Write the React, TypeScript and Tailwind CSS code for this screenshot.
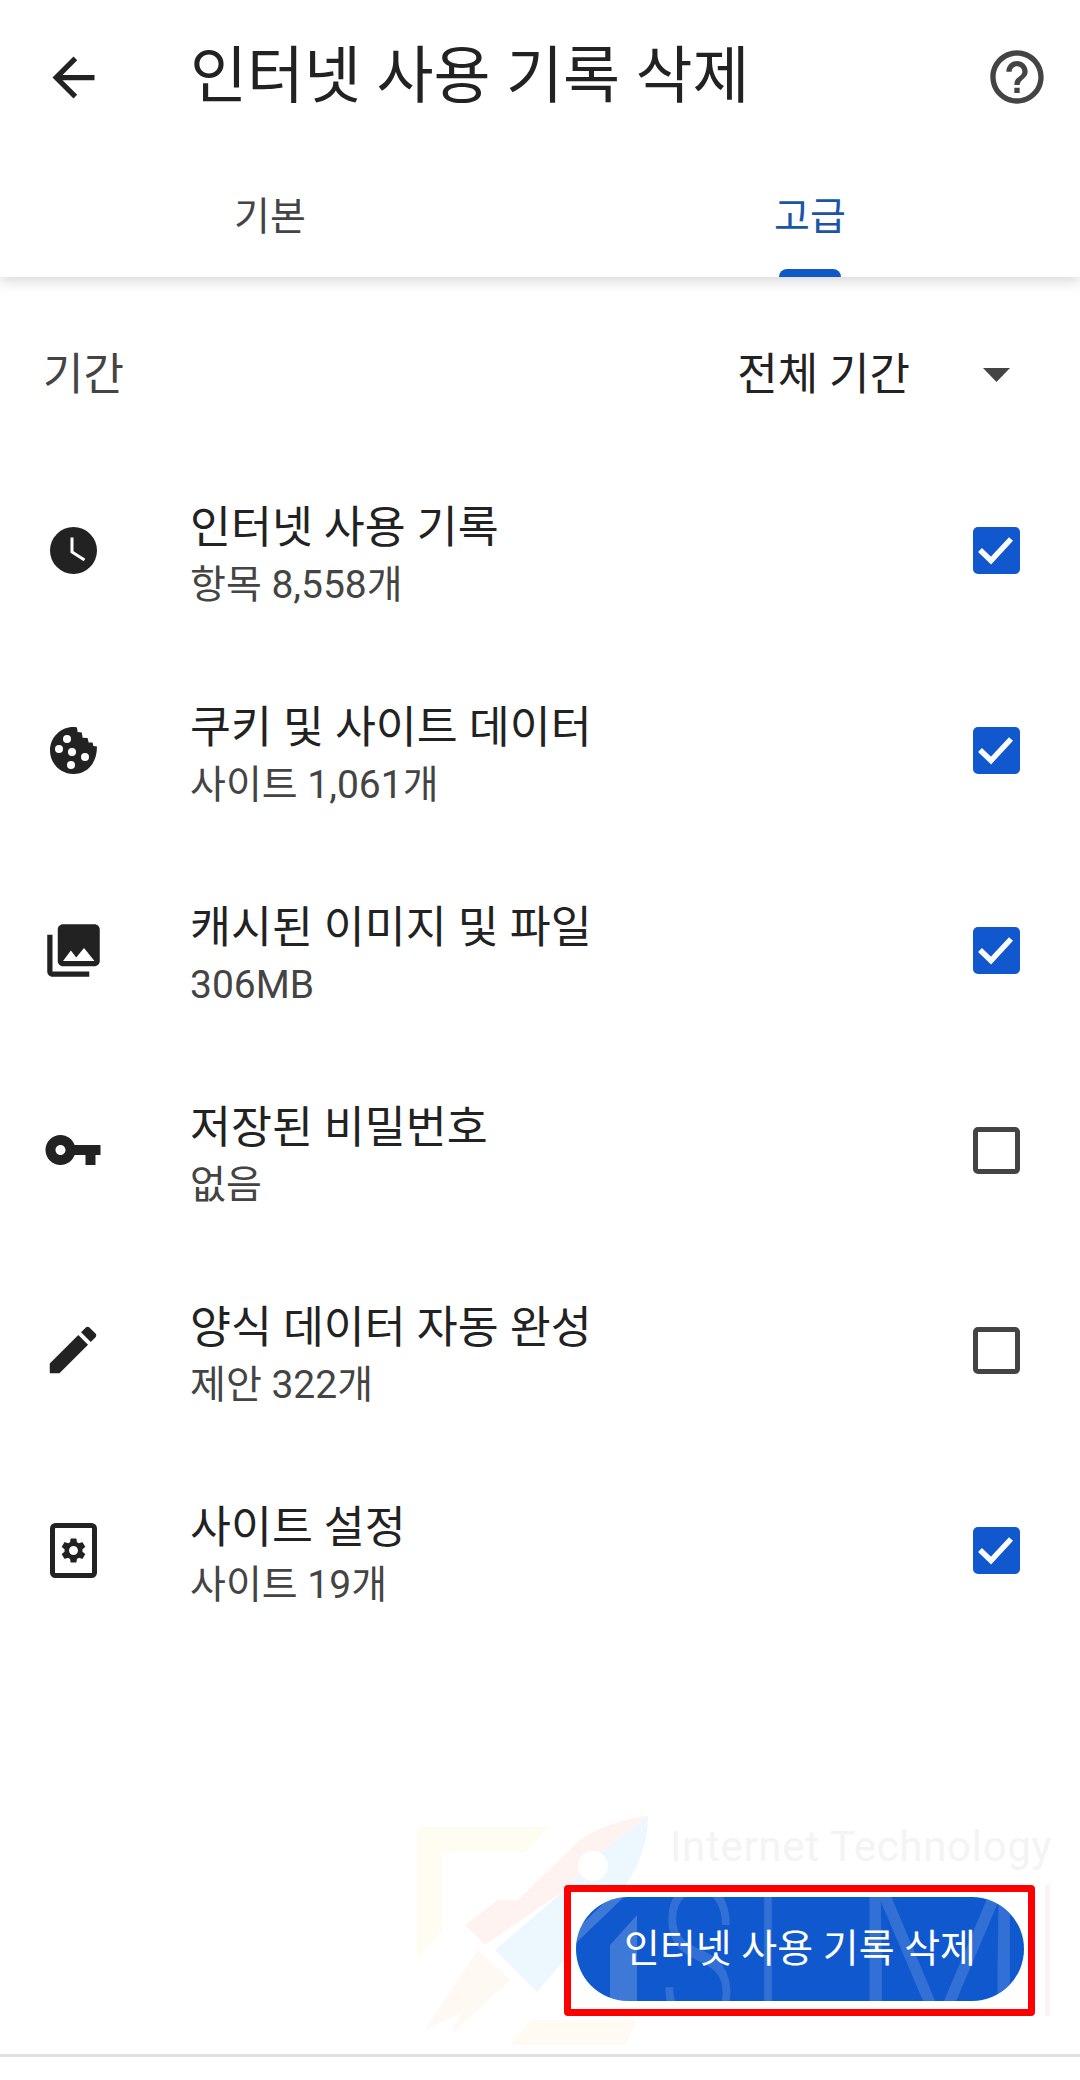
const FONT = 'font-["Roboto","Noto_Sans_CJK_KR",sans-serif]';

function Glyph({ d, size, className = "text-[#222222]" }: { d: string; size: number; className?: string }) {
  return (
    <svg viewBox="0 0 24 24" width={size} height={size} className={className} fill="currentColor">
      <path d={d} fillRule="evenodd" />
    </svg>
  );
}

const PHOTOS =
  "M22 16V4c0-1.1-.9-2-2-2H8c-1.1 0-2 .9-2 2v12c0 1.1.9 2 2 2h12c1.1 0 2-.9 2-2zm-11-4l2.03 2.71L16 11l4 5H8l3-4zM2 6v14c0 1.1.9 2 2 2h14v-2H4V6H2z";
const KEY =
  "M12.65 10C11.83 7.67 9.61 6 7 6c-3.31 0-6 2.69-6 6s2.69 6 6 6c2.61 0 4.83-1.67 5.65-4H17v4h4v-4h2v-4H12.65zM7 14c-1.1 0-2-.9-2-2s.9-2 2-2 2 .9 2 2-.9 2-2 2z";
const EDIT =
  "M3 17.25V21h3.75L17.81 9.94l-3.75-3.75L3 17.25zM20.71 7.04c.39-.39.39-1.02 0-1.41l-2.34-2.34c-.39-.39-1.02-.39-1.41 0l-1.83 1.83 3.75 3.75 1.83-1.83z";
const GEAR =
  "M19.14 12.94c.04-.3.06-.61.06-.94 0-.32-.02-.64-.07-.94l2.03-1.58c.18-.14.23-.41.12-.61l-1.92-3.32c-.12-.22-.37-.29-.59-.22l-2.39.96c-.5-.38-1.03-.7-1.62-.94l-.36-2.54c-.04-.24-.24-.41-.48-.41h-3.84c-.24 0-.43.17-.47.41l-.36 2.54c-.59.24-1.13.57-1.62.94l-2.39-.96c-.22-.08-.47 0-.59.22L2.74 8.87c-.12.21-.08.47.12.61l2.03 1.58c-.05.3-.09.63-.09.94s.02.64.07.94l-2.03 1.58c-.18.14-.23.41-.12.61l1.92 3.32c.12.22.37.29.59.22l2.39-.96c.5.38 1.03.7 1.62.94l.36 2.54c.05.24.24.41.48.41h3.84c.24 0 .44-.17.47-.41l.36-2.54c.59-.24 1.13-.56 1.62-.94l2.39.96c.22.08.47 0 .59-.22l1.92-3.32c.12-.22.07-.47-.12-.61l-2.01-1.58zM12 15.6c-1.98 0-3.6-1.62-3.6-3.6s1.62-3.6 3.6-3.6 3.6 1.62 3.6 3.6-1.62 3.6-3.6 3.6z";

function ClockIcon() {
  return (
    <svg viewBox="0 0 47 47" width={47} height={47}>
      <circle cx="23.5" cy="23.5" r="23.5" fill="#222222" />
      <path d="M22 10.5V25L34.5 33" fill="none" stroke="#ffffff" strokeWidth="3" />
    </svg>
  );
}

function CookieIcon() {
  return (
    <svg viewBox="0 0 47 47" width={47} height={47}>
      <path
        d="M23.5 0C24.8 0 26 .1 27 .4L27.6 5 31.8 5.6 32.6 10.8 37.6 11 38.6 15.4 42.6 15.4 43.4 19 47 19.6C47 36.5 37 47 23.5 47 10.5 47 0 36.5 0 23.5S10.5 0 23.5 0z"
        fill="#222222"
      />
      <circle cx="17" cy="12" r="4" fill="#fff" />
      <circle cx="9" cy="22" r="4" fill="#fff" />
      <circle cx="22" cy="25" r="4" fill="#fff" />
      <circle cx="35" cy="30" r="4" fill="#fff" />
      <circle cx="21" cy="38" r="4" fill="#fff" />
    </svg>
  );
}

function SiteIcon() {
  return (
    <svg viewBox="0 0 47 55" width={47} height={55}>
      <rect x="2.5" y="2.5" width="42" height="50" rx="3" fill="none" stroke="#222222" strokeWidth="5" />
      <g transform="translate(8.5 12.5) scale(1.25)">
        <path d={GEAR} fill="#222222" fillRule="evenodd" />
      </g>
    </svg>
  );
}

function Check({ on }: { on: boolean }) {
  if (!on) return <div className="h-[47px] w-[47px] rounded-[5px] border-[5px] border-[#444444] bg-white" />;
  return (
    <div className="flex h-[47px] w-[47px] items-center justify-center rounded-[5px] bg-[#1158ce]">
      <svg viewBox="0 0 47 47" width={47} height={47}>
        <path d="M7 23l11 10.5L38 12" fill="none" stroke="#ffffff" strokeWidth="5.5" />
      </svg>
    </div>
  );
}

const rows = [
  { icon: <ClockIcon />, title: "인터넷 사용 기록", sub: "항목 8,558개", on: true },
  { icon: <CookieIcon />, title: "쿠키 및 사이트 데이터", sub: "사이트 1,061개", on: true },
  { icon: <Glyph d={PHOTOS} size={63} />, title: "캐시된 이미지 및 파일", sub: "306MB", on: true },
  { icon: <Glyph d={KEY} size={60} />, title: "저장된 비밀번호", sub: "없음", on: false },
  { icon: <Glyph d={EDIT} size={62} />, title: "양식 데이터 자동 완성", sub: "제안 322개", on: false },
  { icon: <SiteIcon />, title: "사이트 설정", sub: "사이트 19개", on: true },
];

function Watermark() {
  return (
    <div className="pointer-events-none absolute left-[400px] top-[1790px] h-[270px] w-[680px]">
      <svg viewBox="0 0 300 270" width={300} height={270}>
        <path d="M17 37H150L125 62H42V140L17 170z" fill="#fffcf2" />
        <path d="M130 230H236L226 255H110z" fill="#fffbf3" />
        <path d="M65 135L98 110H118L180 50Q210 30 248 26Q200 60 165 100L85 155z" fill="#fff3f1" />
        <path d="M78 160L110 190L50 245L62 222L25 240L42 215z" fill="#fff8f3" />
        <path d="M248 26Q248 70 215 110L137 202L95 160L165 100Q200 60 248 26z" fill="#ecf8fe" />
        <circle cx="193" cy="76" r="15" fill="#ffffff" />
      </svg>
      <span className="absolute left-[270px] top-[32px] text-[42px] leading-[50px] tracking-[0.7px] text-[#f4f4f4]">
        Internet Technology
      </span>
      <div className="absolute left-[645px] top-[95px] h-[131px] w-[5px] bg-[#fff2f2]" />
    </div>
  );
}

export default function App() {
  return (
    <div className={`relative flex h-[2080px] w-[1080px] flex-col overflow-hidden bg-white ${FONT}`}>
      <Watermark />
      <div className="relative z-10 bg-white shadow-[0_3px_14px_rgba(0,0,0,0.18)]">
        <header className="flex h-[154px] items-center justify-between pl-[42px] pr-[31px]">
          <div className="flex items-center">
            <Glyph d="M20 11H7.83l5.59-5.59L12 4l-8 8 8 8 1.41-1.41L7.83 13H20v-2z" size={63} className="text-[#222222]" />
            <h1 className="ml-[85px] text-[62px] font-normal leading-none text-[#222222]">인터넷 사용 기록 삭제</h1>
          </div>
          <svg viewBox="0 0 24 24" width={64} height={64} className="text-[#444444]" fill="currentColor">
            <path d="M11 18h2v-2h-2v2zm1-16C6.48 2 2 6.48 2 12s4.48 10 10 10 10-4.48 10-10S17.52 2 12 2zm0 18c-4.41 0-8-3.59-8-8s3.59-8 8-8 8 3.59 8 8-3.59 8-8 8zm0-14c-2.21 0-4 1.79-4 4h2c0-1.1.9-2 2-2s2 .9 2 2c0 2-3 1.75-3 5h2c0-2.25 3-2.5 3-5 0-2.21-1.79-4-4-4z" />
          </svg>
        </header>
        <nav className="flex h-[123px]">
          <div className="flex flex-1 items-start justify-center pt-[34px]">
            <span className="text-[39px] leading-[58px] text-[#444444]">기본</span>
          </div>
          <div className="relative flex flex-1 items-start justify-center pt-[34px]">
            <span className="text-[39px] leading-[58px] text-[#1a56a8]">고급</span>
            <div className="absolute bottom-0 left-1/2 h-[8px] w-[62px] -translate-x-1/2 rounded-t-[8px] bg-[#0f58c8]" />
          </div>
        </nav>
      </div>

      <div className="relative mt-[19px] flex h-[154px] items-center justify-between pl-[43px] pr-[70px] pt-[3px]">
        <span className="text-[44px] text-[#444444]">기간</span>
        <div className="flex items-center">
          <span className="text-[44px] text-[#222222]">전체 기간</span>
          <svg viewBox="0 0 27 14" width={27} height={14} className="ml-[73px] text-[#444444]" fill="currentColor">
            <path d="M0 0h27L13.5 14z" />
          </svg>
        </div>
      </div>

      <div className="relative flex flex-col">
        {rows.map((r) => (
          <div key={r.title} className="flex h-[200px] items-center pr-[60px]">
            <div className="flex w-[146px] shrink-0 justify-center">{r.icon}</div>
            <div className="ml-[44px] flex-1 pt-[12px]">
              <div className="text-[44.5px] leading-[58px] text-[#222222]">{r.title}</div>
              <div className="text-[39px] leading-[56px] text-[#444444]">{r.sub}</div>
            </div>
            <Check on={r.on} />
          </div>
        ))}
      </div>

      <div className="flex-1" />

      <div className="relative flex justify-end pr-[45px]">
        <div className="rounded-[4px] border-[7px] border-[#ff0000] bg-white pb-[8px] pl-[5px] pr-[4px] pt-[5px]">
          <button className="relative flex h-[104px] w-[448px] items-center justify-center overflow-hidden rounded-[52px] bg-[#0f58ce] text-[39px] text-white">
            <svg viewBox="0 0 448 104" width={448} height={104} className="absolute left-0 top-0" fill="#ffffff" fillOpacity="0.2">
              <path d="M0 33L34 0H48L0 46z" />
              <path d="M34 48L61 18V104H34z" />
            </svg>
            <span className="absolute left-[84px] top-[-40px] origin-left scale-x-[0.62] text-[205px] font-light leading-[205px] text-white/15">
              S
            </span>
            <span className="absolute left-[154px] top-[-40px] origin-left scale-x-[0.62] text-[205px] font-light leading-[205px] text-white/15">
              T
            </span>
            <span className="absolute left-[275px] top-[-40px] text-[205px] font-light leading-[205px] text-white/15">
              M
            </span>
            <span className="relative">인터넷 사용 기록 삭제</span>
          </button>
        </div>
      </div>

      <div className="relative mb-[23px] mt-[38px] h-[3px] bg-[#e0e0e0]" />
    </div>
  );
}
